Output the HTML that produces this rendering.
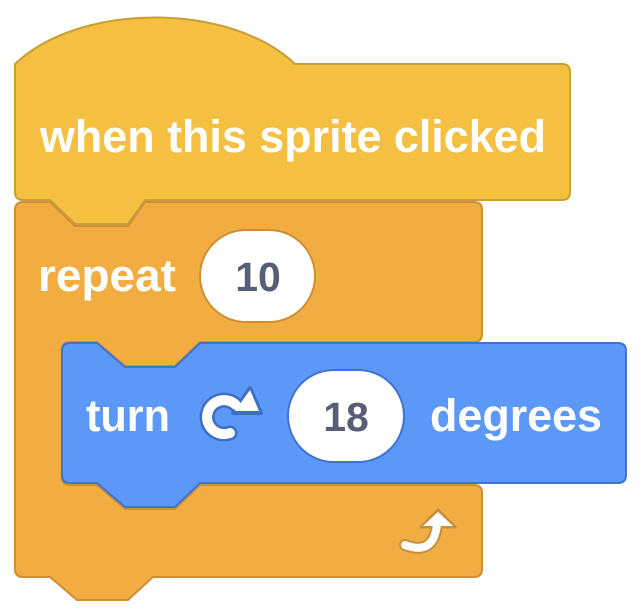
<html><head><style>body{margin:0;background:#fff}</style></head><body>
<svg width="641" height="616" viewBox="0 0 641 616" xmlns="http://www.w3.org/2000/svg" style="display:block">
<path d="M23,202 L50,202 L75,226 L128,226 L145,202 L474,202 Q482,202 482,210 L482,334 Q482,342 474,342 L200,342 L175,366 L125,366 L97,342 L70,342 Q62,342 62,350 L62,477 Q62,485 70,485 L97,485 L125,509 L175,509 L200,485 L474,485 Q482,485 482,493 L482,569 Q482,577 474,577 L153,577 L128,600 L77,600 L50,577 L23,577 Q15,577 15,569 L15,210 Q15,202 23,202 Z" fill="#f1ad41" stroke="#cf8e34" stroke-width="2"/>
<path d="M15,64 C80,2 230,2 295,64 L562,64 Q570,64 570,72 L570,192 Q570,200 562,200 L145,200 L128,224 L75,224 L50,200 L23,200 Q15,200 15,192 Z" fill="#f5bf41" stroke="#c9a035" stroke-width="2"/>
<path d="M70,343 L97,343 L125,367 L175,367 L200,343 L618,343 Q626,343 626,351 L626,475 Q626,483 618,483 L200,483 L175,507 L125,507 L97,483 L70,483 Q62,483 62,475 L62,351 Q62,343 70,343 Z" fill="#5c98f8" stroke="#4072ce" stroke-width="2"/>
<g font-family="Liberation Sans, sans-serif" font-weight="bold" fill="#fff" font-size="45">
<text x="40" y="152" textLength="506" lengthAdjust="spacingAndGlyphs">when this sprite clicked</text>
<text x="38" y="291" textLength="138" lengthAdjust="spacingAndGlyphs">repeat</text>
<text x="86" y="431" textLength="84" lengthAdjust="spacingAndGlyphs">turn</text>
<text x="430" y="431" textLength="172" lengthAdjust="spacingAndGlyphs">degrees</text>
</g>
<rect x="200" y="230" width="115" height="92" rx="46" fill="#fff" stroke="#cf8e34" stroke-width="2"/>
<rect x="288" y="370" width="116" height="92" rx="46" fill="#fff" stroke="#4072ce" stroke-width="2"/>
<g font-family="Liberation Sans, sans-serif" font-weight="bold" fill="#575e75" font-size="41" text-anchor="middle">
<text x="258" y="291">10</text>
<text x="346" y="431">18</text>
</g>
<g fill="none" stroke-linecap="round">
<path d="M230,433 A17,17 0 1 1 236,405" stroke="#3d6fc4" stroke-width="15"/>
</g>
<path d="M250,388 L261,413 L233,413 Z" fill="#fff" stroke="#3d6fc4" stroke-width="4" stroke-linejoin="round"/>
<g fill="none" stroke-linecap="round">
<path d="M230,433 A17,17 0 1 1 236,405" stroke="#fff" stroke-width="10"/>
</g>
<path d="M250,390 L259,411 L235,411 Z" fill="#fff"/>
<g fill="none" stroke-linecap="round">
<path d="M405,545 Q434,556 437,524" stroke="#c98e3c" stroke-width="12"/>
</g>
<path d="M438,510 L455,527 L421,527 Z" fill="#fff" stroke="#c98e3c" stroke-width="3" stroke-linejoin="round"/>
<g fill="none" stroke-linecap="round">
<path d="M405,545 Q434,556 437,524" stroke="#fff" stroke-width="8"/>
</g>
<path d="M438,512 L453,526 L423,526 Z" fill="#fff"/>
</svg>
</body></html>
